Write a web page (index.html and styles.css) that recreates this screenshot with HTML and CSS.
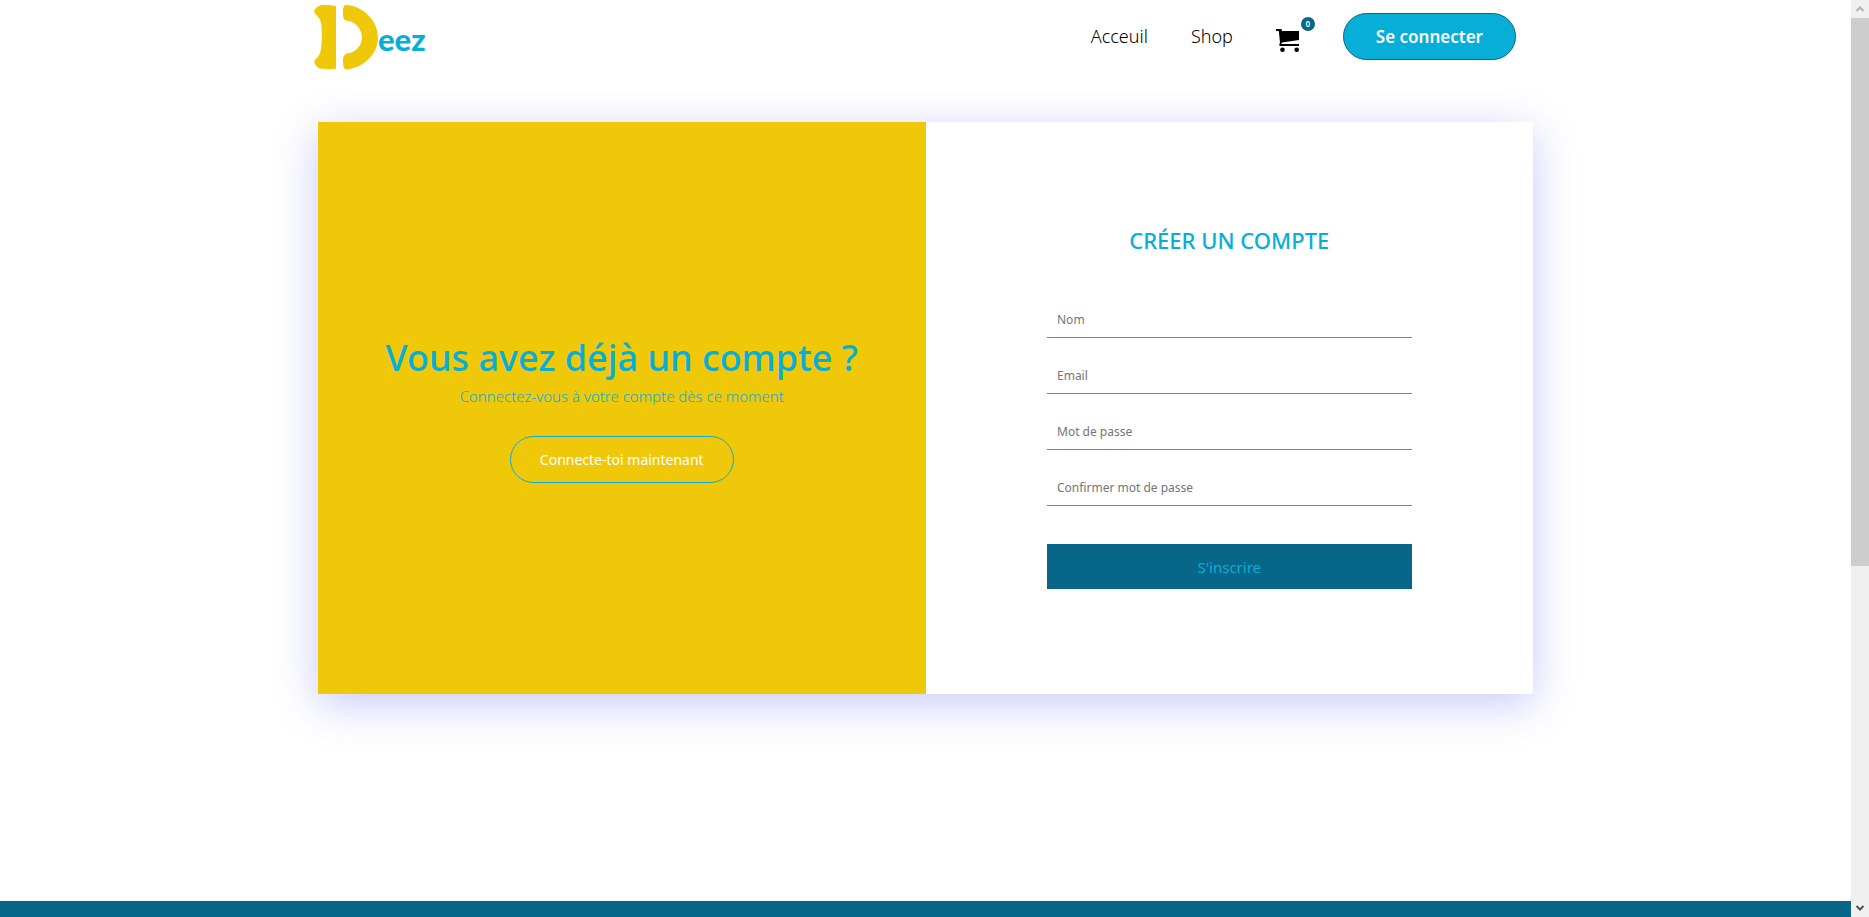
FILE: index.html
```html
<!DOCTYPE html>
<html lang="fr">
<head>
<meta charset="utf-8">
<title>Deez</title>
<link rel="stylesheet" href="styles.css">
</head>
<body>
<div class="page">
  <header class="header">
    <a class="logo" href="#" aria-label="Deez">
      <svg class="logo-mark" viewBox="0 0 64 66" aria-hidden="true">
        <path d="M22 2C16 1 10 .8 6 1.500C2 2.600-1 7.500.8 9.500C4 12.500 7 15 7.500 22C8 30 8 38 7 45C6 51 3.500 54 .8 56C-.8 59 2 63 6 64.500C10 65.400 16 65.200 22 64.800Z"/>
        <path d="M32 1C49 2 64 16 64 34C64 49 51 63 33 65.600C29.500 65.800 28.800 61 29 56C29 52 31 49.500 34 49.300C41 48.500 48 42 48 33.500C48 25 41 17.500 34 17C30 16.600 29 14 29 10C28.800 5 29 1.200 32 1Z"/>
      </svg>
      <span class="logo-text">eez</span>
    </a>
    <nav class="nav">
      <a class="nav-link" href="#">Acceuil</a>
      <a class="nav-link" href="#">Shop</a>
      <a class="cart" href="#" aria-label="Panier">
        <svg class="cart-icon" viewBox="0 0 24 24" aria-hidden="true">
          <path d="M0 0H5.500L6 2H23V11L6 13.500L5.500 15H23V17H4.500Q3 17 3.300 15.500L4 13.500L2.800 2H0Z"/>
          <path d="M5.500 14.300L23 11.800V14.800H5.500Z" fill="#fff"/>
          <circle cx="6.500" cy="20.800" r="2.300"/>
          <circle cx="20.700" cy="20.800" r="2.300"/>
        </svg>
        <span class="badge">0</span>
      </a>
      <button class="login" type="button">Se connecter</button>
    </nav>
  </header>
  <main class="main">
    <div class="card">
      <section class="welcome">
        <h1 class="welcome-title">Vous avez déjà un compte ?</h1>
        <p class="welcome-text">Connectez-vous à votre compte dès ce moment</p>
        <button class="welcome-button" type="button">Connecte-toi maintenant</button>
      </section>
      <section class="signup">
        <h2 class="signup-title">CRÉER UN COMPTE</h2>
        <form class="form">
          <input class="field" type="text" placeholder="Nom" aria-label="Nom">
          <input class="field" type="email" placeholder="Email" aria-label="Email">
          <input class="field" type="password" placeholder="Mot de passe" aria-label="Mot de passe">
          <input class="field" type="password" placeholder="Confirmer mot de passe" aria-label="Confirmer mot de passe">
          <button class="submit" type="submit">S'inscrire</button>
        </form>
      </section>
    </div>
  </main>
  <footer class="footer"></footer>
</div>
<div class="scrollbar" aria-hidden="true">
  <svg class="arrow arrow-up" viewBox="0 0 18 18"><path d="M5.500 11L9 7.500L12.500 11"/></svg>
  <div class="track"><div class="thumb"></div></div>
  <svg class="arrow" viewBox="0 0 18 18"><path d="M5.500 7L9 10.500L12.500 7"/></svg>
</div>
</body>
</html>
```

FILE: styles.css
```css
* {
  box-sizing: border-box;
}

body {
  margin: 0;
  display: grid;
  grid-template-columns: 1fr 18px;
  height: 100vh;
  overflow: hidden;
  background: #fff;
  font-family: "Noto Sans", "Open Sans", sans-serif;
}

button,
input {
  font-family: inherit;
}

.page {
  display: flex;
  flex-direction: column;
  min-height: 100vh;
}

.header {
  display: flex;
  justify-content: space-between;
  align-items: center;
  width: 90%;
  max-width: 1223px;
  height: 74px;
  margin: 0 auto;
  padding-right: 21px;
}

.logo {
  display: flex;
  align-items: center;
  text-decoration: none;
}

.logo-mark {
  width: 64px;
  height: 66px;
  fill: #f0c80a;
}

.logo-text {
  padding-top: 3px;
  color: #08aed8;
  font-family: Lato, sans-serif;
  font-size: 31px;
  font-weight: 900;
  line-height: 36px;
}

.nav {
  display: flex;
  align-items: center;
  padding-bottom: 2px;
}

.nav-link {
  margin-right: 43px;
  color: #000;
  font-size: 18px;
  font-weight: 300;
  text-decoration: none;
}

.cart {
  position: relative;
  display: block;
  margin: 10px 43px 0 0;
}

.cart-icon {
  display: block;
  width: 24px;
  height: 24px;
}

.badge {
  position: absolute;
  top: -12px;
  left: 25px;
  width: 14px;
  height: 14px;
  border-radius: 50%;
  background: #086788;
  color: #fff;
  font-size: 8px;
  font-weight: 600;
  line-height: 14px;
  text-align: center;
}

.login {
  height: 47px;
  padding: 0 32px;
  border: 1px solid #086788;
  border-radius: 24px;
  background: #07aed8;
  color: #fff;
  font-size: 17px;
  font-weight: 600;
}

.main {
  flex: 1;
  padding-top: 48px;
}

.card {
  display: grid;
  grid-template-columns: 1fr 1fr;
  width: 90%;
  max-width: 1215px;
  min-height: 572px;
  margin: 0 auto;
  box-shadow: 0 10px 40px rgba(70, 80, 235, 0.3);
}

.welcome,
.signup {
  display: flex;
  flex-direction: column;
  align-items: center;
  justify-content: center;
}

.welcome {
  background: #f0c80a;
  color: #07aed8;
}

.signup {
  background: #fff;
}

.welcome-title {
  margin: 0 0 1px;
  font-size: 36px;
  font-weight: 500;
  line-height: 50px;
}

.welcome-text {
  margin: 0 0 28px;
  font-size: 15px;
  font-weight: 300;
  line-height: 24px;
}

.welcome-button {
  height: 47px;
  padding: 0 29px;
  border: 1px solid #07aed8;
  border-radius: 24px;
  background: transparent;
  color: #fff;
  font-size: 14px;
}

.signup-title {
  margin: 0 0 49px;
  color: #07aed8;
  font-size: 22px;
  font-weight: 500;
  line-height: 26px;
}

.form {
  display: flex;
  flex-direction: column;
  gap: 20px;
  width: 60%;
}

.field {
  height: 36px;
  padding: 0 10px;
  border: 0;
  border-bottom: 1px solid #07aed8;
  background: transparent;
  font-size: 12px;
}

.field::placeholder {
  color: #757575;
}

.submit {
  height: 45px;
  margin-top: 18px;
  border: 0;
  background: #086788;
  color: #07aed8;
  font-size: 15px;
}

.footer {
  height: 16px;
  background: #086788;
}

.scrollbar {
  display: flex;
  flex-direction: column;
  height: 100vh;
  background: #f0f0f0;
}

.arrow {
  width: 18px;
  height: 18px;
  fill: none;
  stroke: #505050;
  stroke-width: 2;
}

.arrow-up {
  stroke: #b0b0b0;
}

.track {
  flex: 1;
}

.thumb {
  height: 62.2%;
  background: #cdcdcd;
}
```
